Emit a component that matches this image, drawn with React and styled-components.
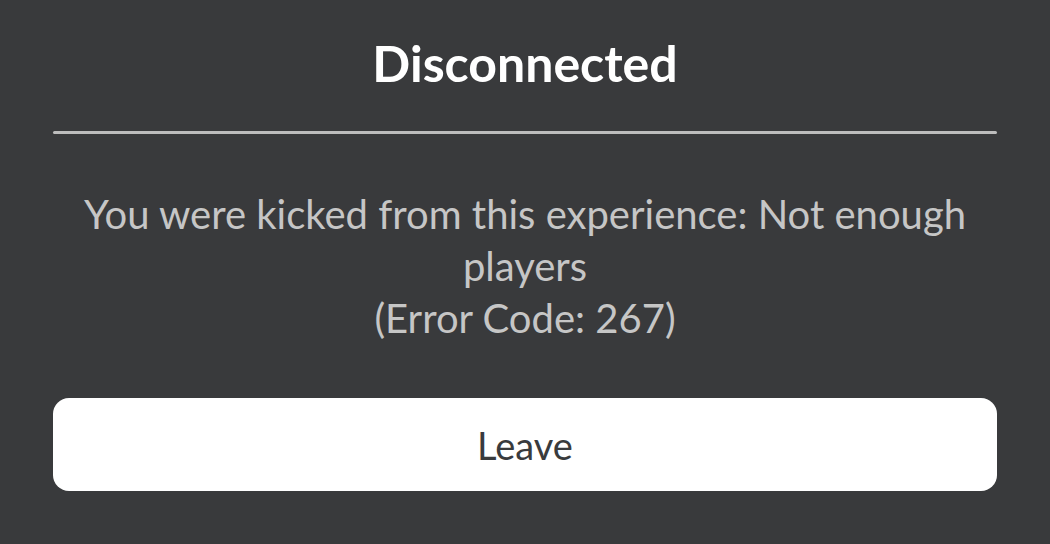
import React from 'react';
import styled, { createGlobalStyle } from 'styled-components';

const Global = createGlobalStyle`
  html, body { margin: 0; padding: 0; background: #393a3c; }
  body { font-family: Lato, "Noto Sans", sans-serif; }
`;

const Dialog = styled.div`
  width: 1050px;
  height: 544px;
  box-sizing: border-box;
  background: #393a3c;
  padding: 0 53px;
  display: flex;
  flex-direction: column;
`;

const Title = styled.h1`
  margin: 0;
  height: 131px;
  box-sizing: border-box;
  padding-top: 37px;
  text-align: center;
  color: #ffffff;
  font-size: 50px;
  font-weight: 700;
  line-height: 52px;
`;

const Divider = styled.div`
  height: 3px;
  background: #bdbdbd;
  border-radius: 2px;
`;

const Message = styled.p`
  margin: 0;
  padding-top: 54px;
  height: 264px;
  box-sizing: border-box;
  text-align: center;
  color: #c6c6c6;
  font-size: 40px;
  line-height: 52px;
`;

const LeaveButton = styled.button`
  height: 93px;
  border: none;
  border-radius: 16px;
  background: #ffffff;
  color: #393b3d;
  font-family: inherit;
  font-size: 38px;
  cursor: pointer;
`;

export default function App() {
  return (
    <>
      <Global />
      <Dialog>
        <Title>Disconnected</Title>
        <Divider />
        <Message>
          You were kicked from this experience: Not enough players
          <br />
          (Error Code: 267)
        </Message>
        <LeaveButton>Leave</LeaveButton>
      </Dialog>
    </>
  );
}
